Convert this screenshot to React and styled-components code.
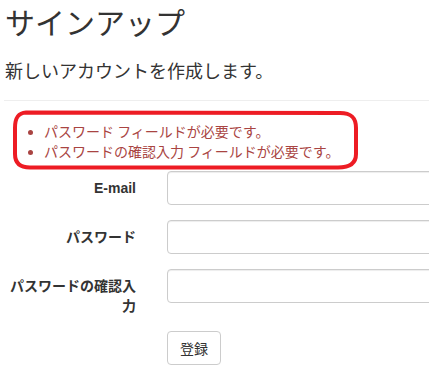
import React from "react";
import styled, { createGlobalStyle } from "styled-components";

const GlobalStyle = createGlobalStyle`
  html, body {
    margin: 0;
    padding: 0;
    background: #fff;
  }
  body {
    font-family: "Liberation Sans", "Noto Sans CJK JP", sans-serif;
    font-size: 14px;
    line-height: 1.42857;
    color: #333;
  }
  * { box-sizing: border-box; }
`;

const errors = [
  "パスワード フィールドが必要です。",
  "パスワードの確認入力 フィールドが必要です。",
];

const fields = [
  { id: "email", label: "E-mail", type: "email" },
  { id: "password", label: "パスワード", type: "password" },
  { id: "confirm", label: "パスワードの確認入力", type: "password" },
];

export default function App() {
  return (
    <Page>
      <GlobalStyle />
      <Title>サインアップ</Title>
      <Lead>新しいアカウントを作成します。</Lead>
      <Rule />
      <Summary>
        {errors.map((e, i) => (
          <li key={i}>{e}</li>
        ))}
      </Summary>
      <Form onSubmit={(e) => e.preventDefault()}>
        {fields.map((f) => (
          <Group key={f.id}>
            <Label htmlFor={f.id}>{f.label}</Label>
            <Field>
              <Input id={f.id} type={f.type} />
            </Field>
          </Group>
        ))}
        <Group>
          <span />
          <Field>
            <Button type="submit">登録</Button>
          </Field>
        </Group>
      </Form>
      <Marker viewBox="0 0 429 390" aria-hidden="true">
        <path
          d="M26 112.5 L340 113 C352 113 356 118 356 128 L356 154 C356 163 350 167.5 338 167.5 L30 167.5 C20 167.5 15 163 15 154 L15 128 C15 118 18 113 26 112.5 Z"
          fill="none"
          stroke="#ed1c24"
          strokeWidth="4"
          strokeLinejoin="round"
        />
      </Marker>
    </Page>
  );
}

const Page = styled.div`
  position: relative;
  width: 429px;
  height: 390px;
  overflow: hidden;
  padding: 5px 0 0 4px;
`;

const Title = styled.h2`
  margin: 0 0 0 1px;
  font-family: "Noto Sans CJK JP", sans-serif;
  font-size: 30px;
  font-weight: 400;
  line-height: 33px;
`;

const Lead = styled.h4`
  margin: 22px 0 20px 1px;
  font-family: "Noto Sans CJK JP", sans-serif;
  font-size: 18px;
  font-weight: 400;
  line-height: 20px;
`;

const Rule = styled.hr`
  margin: 0 0 20px;
  border: 0;
  border-top: 1px solid #eee;
`;

const Summary = styled.ul`
  margin: 0 0 10px;
  padding-left: 40px;
  color: #a94442;
  line-height: 20px;
  font-family: "Noto Sans CJK JP", sans-serif;
  li::marker {
    font-size: 12px;
  }
`;

const Form = styled.form`
  margin: 0;
`;

const Group = styled.div`
  display: grid;
  grid-template-columns: 147px 1fr;
  margin-bottom: 15px;
`;

const Label = styled.label`
  padding: 7px 15px 0 0;
  text-align: right;
  font-weight: 700;
  line-height: 20px;
`;

const Field = styled.div`
  padding-left: 16px;
`;

const Input = styled.input`
  display: block;
  width: 280px;
  height: 34px;
  padding: 6px 12px;
  border: 1px solid #ccc;
  border-radius: 4px;
  font: inherit;
  box-shadow: inset 0 1px 1px rgba(0, 0, 0, 0.075);
`;

const Button = styled.button`
  display: inline-block;
  height: 34px;
  padding: 6px 12px;
  border: 1px solid #ccc;
  border-radius: 4px;
  background: #fff;
  color: #333;
  font-family: "Noto Sans CJK JP", sans-serif;
  font-size: 14px;
  line-height: 20px;
`;

const Marker = styled.svg`
  position: absolute;
  top: 0;
  left: 0;
  width: 429px;
  height: 390px;
  pointer-events: none;
`;
